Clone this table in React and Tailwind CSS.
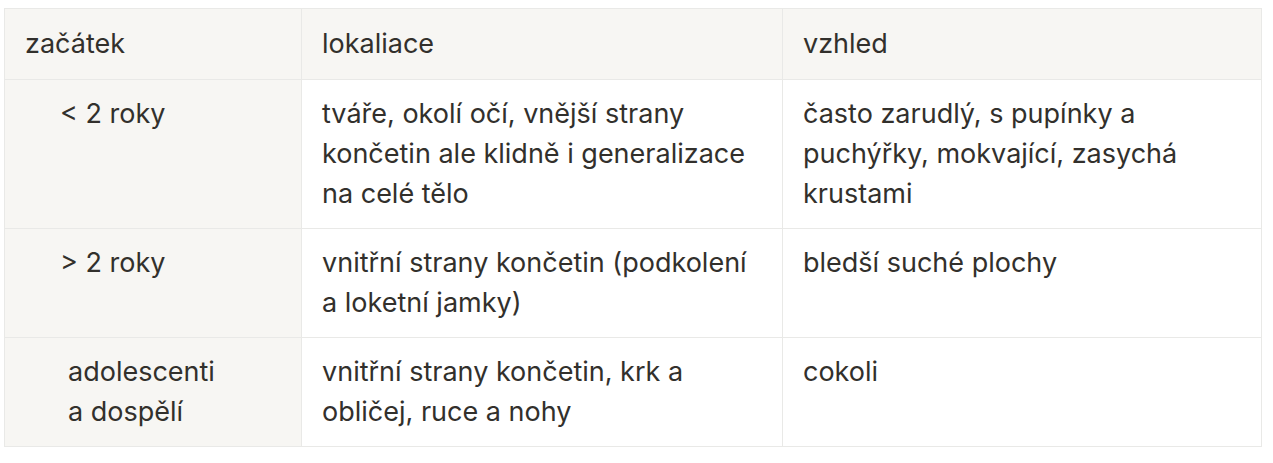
const rows = [
  {
    start: '< 2 roky',
    indent: 'pl-[55px]',
    place: 'tváře, okolí očí, vnější strany končetin ale klidně i generalizace na celé tělo',
    look: 'často zarudlý, s pupínky a puchýřky, mokvající, zasychá krustami',
  },
  {
    start: '> 2 roky',
    indent: 'pl-[55px]',
    place: 'vnitřní strany končetin (podkolení a loketní jamky)',
    look: 'bledší suché plochy',
  },
  {
    start: (
      <>
        adolescenti
        <br />a dospělí
      </>
    ),
    indent: 'pl-[63px]',
    place: 'vnitřní strany končetin, krk a obličej, ruce a nohy',
    look: 'cokoli',
  },
];

const App = () => {
  return (
    <div className="min-h-[463px] bg-white pt-2 pl-1 font-['Inter','Liberation_Sans',sans-serif] text-[#32302c]">
      <table className="table-fixed border-collapse text-[27px] leading-[40px]">
        <colgroup>
          <col className="w-[297px]" />
          <col className="w-[481px]" />
          <col className="w-[479px]" />
        </colgroup>
        <thead>
          <tr className="bg-[#f7f6f3]">
            <th className="border border-[#e9e9e7] px-5 py-[15px] text-left font-normal">začátek</th>
            <th className="border border-[#e9e9e7] px-5 py-[15px] text-left font-normal">lokaliace</th>
            <th className="border border-[#e9e9e7] px-5 py-[15px] text-left font-normal">vzhled</th>
          </tr>
        </thead>
        <tbody>
          {rows.map((row, i) => (
            <tr key={i} className="align-top">
              <td className={`border border-[#e9e9e7] bg-[#f7f6f3] py-[14px] pr-5 ${row.indent}`}>
                {row.start}
              </td>
              <td className="border border-[#e9e9e7] px-5 py-[14px]">{row.place}</td>
              <td className="border border-[#e9e9e7] px-5 py-[14px]">{row.look}</td>
            </tr>
          ))}
        </tbody>
      </table>
    </div>
  );
};

export default App;
